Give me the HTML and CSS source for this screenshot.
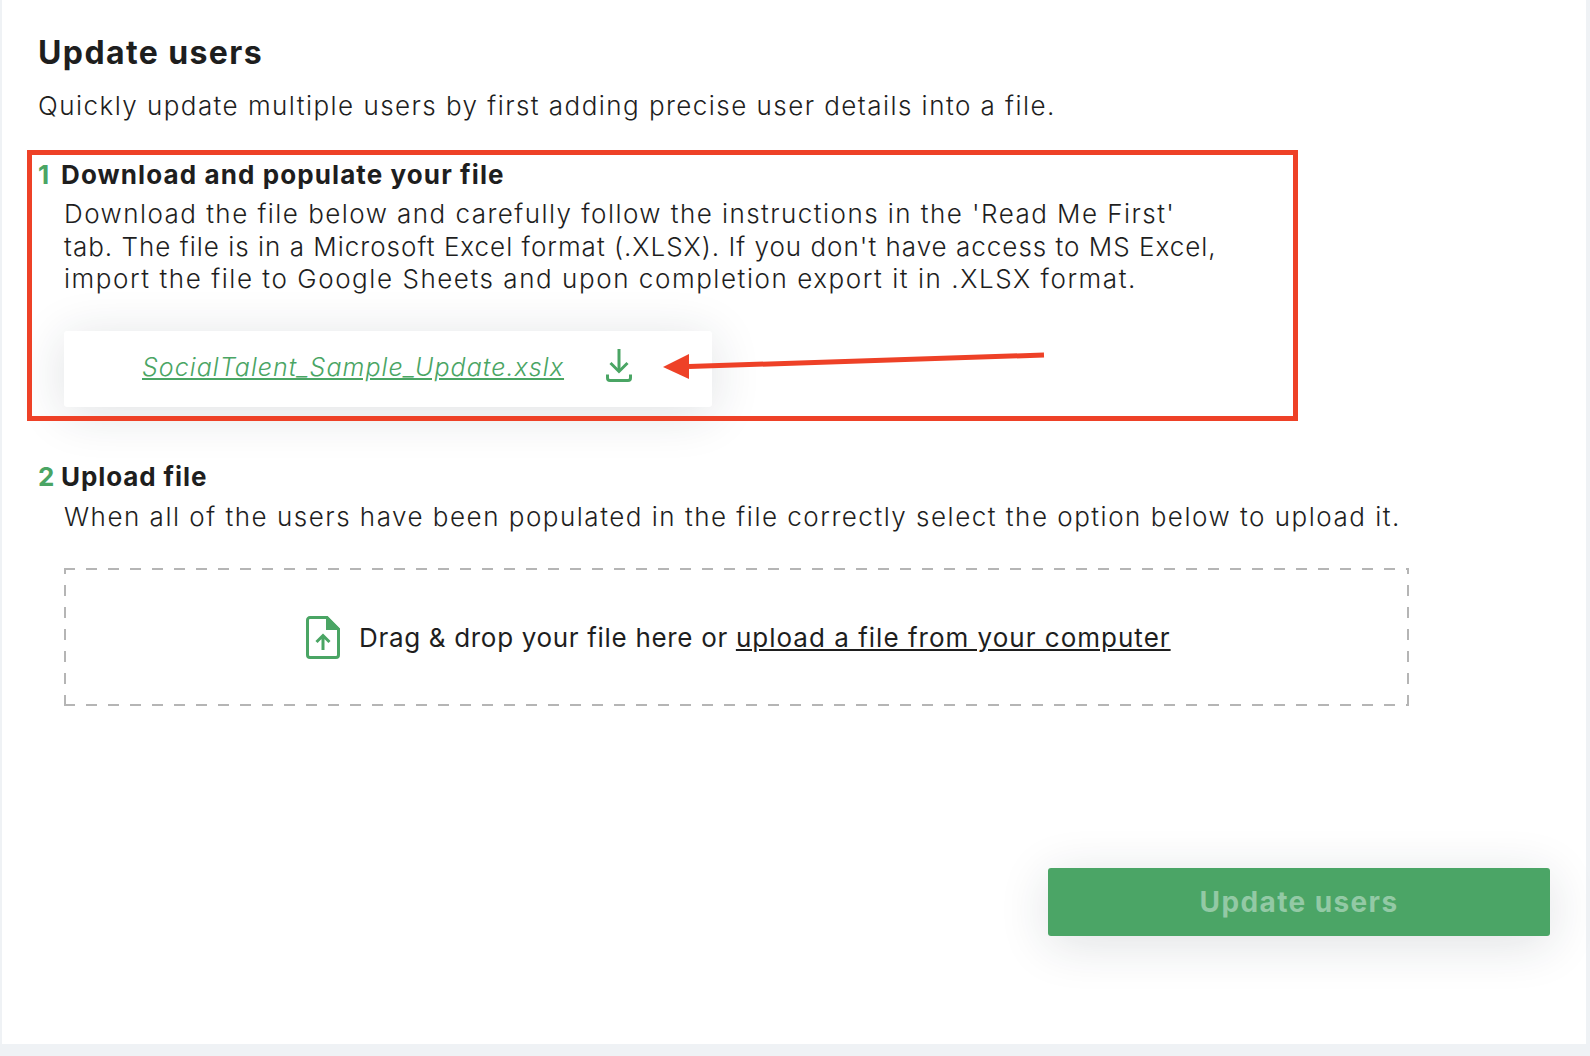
FILE: index.html
```html
<!DOCTYPE html>
<html lang="en">
<head>
<meta charset="utf-8">
<title>Update users</title>
<link rel="stylesheet" href="styles.css">
</head>
<body>
<main class="panel">
  <h1 class="title">Update users</h1>
  <p class="intro">Quickly update multiple users by first adding precise user details into a file.</p>

  <section class="step step-one">
    <h2 class="step-title"><span class="step-num">1</span><span class="step-name">Download and populate your file</span></h2>
    <p class="step-text">Download the file below and carefully follow the instructions in the 'Read Me First'<br><span class="line-tight">tab. The file is in a Microsoft Excel format (.XLSX). If you don't have access to MS Excel,</span><br><span class="line-loose">import the file to Google Sheets and upon completion export it in .XLSX format.</span></p>
    <div class="file-card">
      <a class="file-link" href="#">SocialTalent_Sample_Update.xslx</a>
      <svg class="file-icon" width="26" height="33" viewBox="0 0 26 33" fill="none" stroke="#4aa564" stroke-width="3">
        <path d="M13 0V22"/>
        <path d="M4.500 14L13 22.500L21.500 14"/>
        <path d="M1.500 25.500V29A2.500 2.500 0 0 0 4 31.500H22A2.500 2.500 0 0 0 24.500 29V25.500"/>
      </svg>
    </div>
  </section>

  <section class="step step-two">
    <h2 class="step-title"><span class="step-num">2</span><span class="step-name">Upload file</span></h2>
    <p class="step-text">When all of the users have been populated in the file correctly select the option below to upload it.</p>
    <div class="dropzone">
      <svg class="drop-icon" width="34" height="43" viewBox="0 0 34 43" fill="none">
        <path d="M4 1.500H21L32.500 13V39A2.500 2.500 0 0 1 30 41.500H4A2.500 2.500 0 0 1 1.500 39V4A2.500 2.500 0 0 1 4 1.500Z" stroke="#4aa564" stroke-width="3"/>
        <path d="M21 1.500L32.500 13H21Z" fill="#4aa564" stroke="#4aa564" stroke-width="2"/>
        <path d="M17 34V20M10.500 26L17 19.500L23.500 26" stroke="#4aa564" stroke-width="3"/>
      </svg>
      <span class="drop-text">Drag &amp; drop your file here or <a class="drop-link" href="#">upload a file from your computer</a></span>
    </div>
  </section>

  <div class="actions">
    <button class="submit" type="button">Update users</button>
  </div>

  <div class="highlight"></div>
  <svg class="arrow" width="385" height="30" viewBox="0 0 385 30">
    <path d="M26 14.500L381 3" stroke="#ee4127" stroke-width="5" fill="none"/>
    <path d="M0 15L26 2V27Z" fill="#ee4127"/>
  </svg>
</main>
</body>
</html>
```
FILE: styles.css
```css
* { box-sizing: border-box; }
html, body { margin: 0; padding: 0; }
body {
  width: 1590px;
  height: 1056px;
  overflow: hidden;
  background: #eff2f5;
  font-family: Inter, "Liberation Sans", sans-serif;
  color: #1e1e1e;
}
.panel {
  position: relative;
  width: 1584px;
  height: 1044px;
  margin-left: 2px;
  padding: 34px 0 0 36px;
  background: #fff;
}
.title {
  margin: 0;
  font-size: 32px;
  line-height: 38px;
  letter-spacing: 1.4px;
  font-weight: 700;
}
.intro {
  margin: 17px 0 0;
  font-size: 26px;
  line-height: 34px;
  letter-spacing: 1.45px;
  font-weight: 300;
}
.step-one { margin-top: 35px; }
.step-two { margin-top: 53px; }
.step-title {
  display: flex;
  margin: 0;
  font-size: 26px;
  line-height: 34px;
  letter-spacing: 1.1px;
  font-weight: 700;
}
.step-two .step-title { letter-spacing: 0.9px; }
.step-num {
  width: 23px;
  color: #4aa564;
}
.step-text {
  margin: 6px 0 0 26px;
  font-size: 26px;
  line-height: 32.500px;
  letter-spacing: 1.45px;
  font-weight: 300;
}
.line-tight { letter-spacing: 1px; }
.line-loose { letter-spacing: 1.55px; }
.step-two .step-text {
  margin-top: 7px;
  letter-spacing: 1.5px;
}
.file-card {
  display: flex;
  align-items: center;
  width: 648px;
  height: 76px;
  margin: 35px 0 0 26px;
  padding: 0 0 4px 78px;
  background: #fff;
  border-radius: 3px;
  box-shadow: 0 6px 50px rgba(30, 40, 60, 0.14);
}
.file-link {
  color: #4aa564;
  font-size: 25px;
  letter-spacing: 1.06px;
  font-style: italic;
  font-weight: 300;
}
.file-icon {
  margin: 0 0 2px 42px;
}
.dropzone {
  display: flex;
  align-items: center;
  width: 1345px;
  height: 138px;
  margin: 35px 0 0 26px;
  padding-left: 242px;
  background-image:
    repeating-linear-gradient(90deg, #b5b5b5 0 11px, transparent 11px 22px),
    repeating-linear-gradient(90deg, #b5b5b5 0 11px, transparent 11px 22px),
    repeating-linear-gradient(0deg, #b5b5b5 0 11px, transparent 11px 22px),
    repeating-linear-gradient(0deg, #b5b5b5 0 11px, transparent 11px 22px);
  background-size: 100% 2px, 100% 2px, 2px 100%, 2px 100%;
  background-position: 0 0, 0 100%, 0 0, 100% 0;
  background-repeat: no-repeat;
}
.drop-text {
  margin-left: 19px;
  font-size: 26px;
  letter-spacing: 0.68px;
  font-weight: 400;
}
.drop-link {
  color: inherit;
  letter-spacing: 1.01px;
}
.actions {
  display: flex;
  justify-content: flex-end;
  margin-top: 162px;
  padding-right: 36px;
}
.submit {
  width: 502px;
  height: 68px;
  border: 0;
  border-radius: 3px;
  background: #4ba566;
  color: #93c9a5;
  font-family: inherit;
  font-size: 28px;
  letter-spacing: 1.4px;
  font-weight: 700;
  box-shadow: 0 8px 50px rgba(30, 40, 60, 0.14);
}
.highlight {
  position: absolute;
  left: 25px;
  top: 150px;
  width: 1271px;
  height: 271px;
  border: 5px solid #ee4127;
}
.arrow {
  position: absolute;
  left: 661px;
  top: 352px;
}
```
